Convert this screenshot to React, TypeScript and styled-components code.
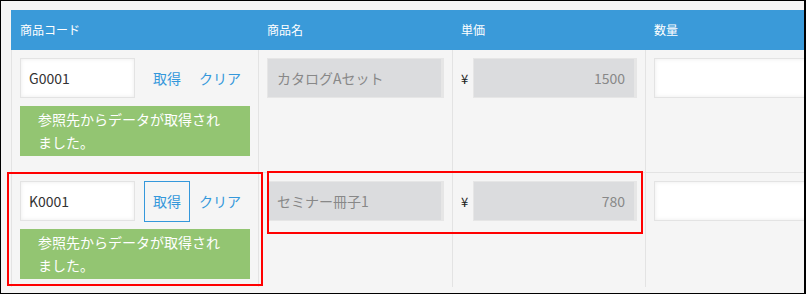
import React from "react";
import styled, { createGlobalStyle } from "styled-components";

const GlobalStyle = createGlobalStyle`
  * { box-sizing: border-box; }
  html, body { margin: 0; padding: 0; background: #fff; }
  body {
    font-family: "Noto Sans CJK JP", "Noto Sans", sans-serif;
  }
`;

interface Row {
  code: string;
  name: string;
  price: string;
  focused?: boolean;
}

const rows: Row[] = [
  { code: "G0001", name: "カタログAセット", price: "1500" },
  { code: "K0001", name: "セミナー冊子1", price: "780", focused: true },
];

const App: React.FC = () => {
  return (
    <>
      <GlobalStyle />
      <Frame>
        <Table>
          <HeadCell>商品コード</HeadCell>
          <HeadCell>商品名</HeadCell>
          <HeadCell>単価</HeadCell>
          <HeadCell>数量</HeadCell>
          {rows.map((row, i) => (
            <React.Fragment key={row.code}>
              <Cell $last={i === rows.length - 1}>
                <LookupRow>
                  <TextInput defaultValue={row.code} />
                  <LinkButton $outlined={row.focused}>取得</LinkButton>
                  <LinkButton>クリア</LinkButton>
                </LookupRow>
                <Notice>参照先からデータが取得されました。</Notice>
              </Cell>
              <Cell $last={i === rows.length - 1}>
                <ReadOnlyField>{row.name}</ReadOnlyField>
              </Cell>
              <Cell $last={i === rows.length - 1}>
                <PriceRow>
                  <Yen>¥</Yen>
                  <ReadOnlyField $right>{row.price}</ReadOnlyField>
                </PriceRow>
              </Cell>
              <Cell $last={i === rows.length - 1}>
                <TextInput $wide />
              </Cell>
            </React.Fragment>
          ))}
        </Table>
        <Highlight style={{ left: 6, top: 171, width: 256, height: 114 }} />
        <Highlight style={{ left: 266, top: 170, width: 376, height: 63 }} />
      </Frame>
    </>
  );
};

const Frame = styled.div`
  position: relative;
  width: 806px;
  height: 294px;
  overflow: hidden;
  background: #f5f5f5;
  border: 1px solid #000;
  border-right-width: 2px;
  padding: 9px 0 0 10px;
`;

const Table = styled.div`
  display: grid;
  grid-template-columns: 247px 194px 193px 240px;
  grid-auto-rows: auto;
`;

const HeadCell = styled.div`
  height: 40px;
  background: #3a9ad9;
  color: #fff;
  font-size: 12px;
  line-height: 40px;
  padding-left: 8px;
  border-left: 1px solid #3a9ad9;
  white-space: nowrap;
`;

const Cell = styled.div<{ $last?: boolean }>`
  border-left: 1px solid #e3e3e3;
  border-bottom: ${(p) => (p.$last ? "none" : "1px solid #e3e3e3")};
  padding: 8px 8px ${(p) => (p.$last ? "8px" : "16px")};
  min-width: 0;
`;

const LookupRow = styled.div`
  display: flex;
  align-items: center;
  height: 40px;
`;

const TextInput = styled.input<{ $wide?: boolean }>`
  width: ${(p) => (p.$wide ? "100%" : "115px")};
  height: 40px;
  border: 1px solid #e3e3e3;
  background: #fff;
  box-shadow: inset 0 0 4px rgba(0, 0, 0, 0.08);
  padding: 0 8px;
  font-family: "Noto Sans CJK JP", "Noto Sans", sans-serif;
  font-size: 14px;
  color: #333;
  outline: none;
`;

const LinkButton = styled.button<{ $outlined?: boolean }>`
  height: 41px;
  margin-left: 9px;
  padding: 0 8px;
  background: transparent;
  border: 1px solid ${(p) => (p.$outlined ? "#3498db" : "transparent")};
  color: #3498db;
  font-family: "Noto Sans CJK JP", "Noto Sans", sans-serif;
  font-size: 14px;
  cursor: pointer;
  & + & {
    margin-left: 0;
  }
`;

const Notice = styled.div`
  margin-top: 8px;
  background: #93c572;
  color: #fff;
  font-size: 14px;
  line-height: 23px;
  padding: 2px 18px;
`;

const PriceRow = styled.div`
  display: flex;
  align-items: center;
  gap: 5px;
`;

const Yen = styled.span`
  font-size: 13px;
  color: #222;
  width: 7px;
`;

const ReadOnlyField = styled.div<{ $right?: boolean }>`
  flex: 1;
  height: 40px;
  background: #dbdcde;
  border: 1px solid #e6e6e6;
  border-right-width: 3px;
  color: #888;
  font-size: 14px;
  line-height: 38px;
  padding: 0 9px;
  text-align: ${(p) => (p.$right ? "right" : "left")};
  white-space: nowrap;
  overflow: hidden;
`;

const Highlight = styled.div`
  position: absolute;
  border: 2px solid #ff0000;
  pointer-events: none;
`;

export default App;
